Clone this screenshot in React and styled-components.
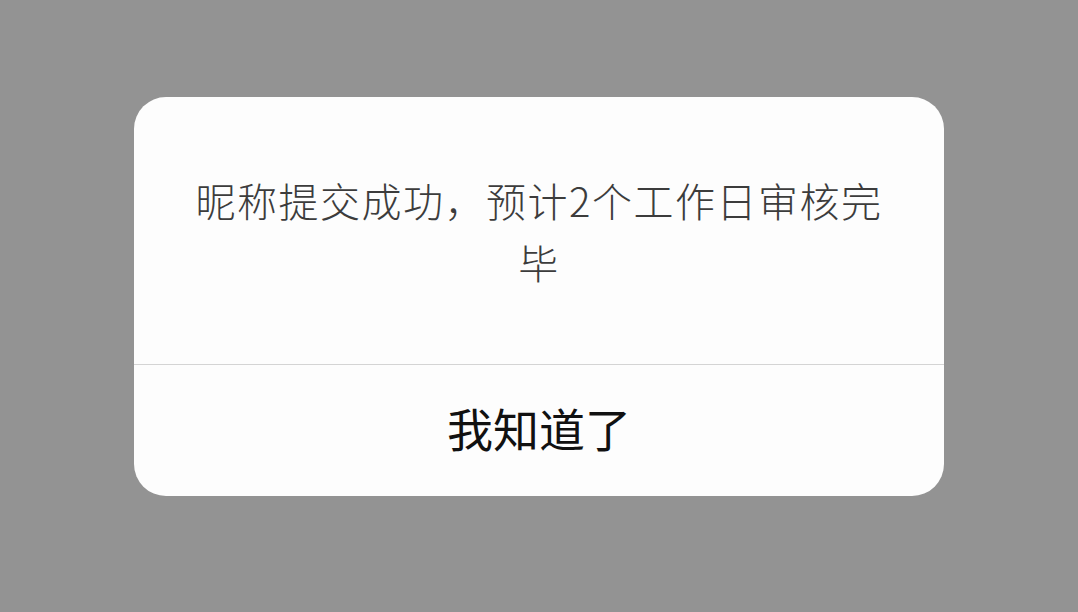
import React from 'react'
import styled, {createGlobalStyle} from 'styled-components'

const GlobalStyle = createGlobalStyle`
  html, body {
    margin: 0;
    padding: 0;
    background: #939393;
    font-family: "Noto Sans CJK SC", "Noto Sans", sans-serif;
  }
`

const Overlay = styled.div`
  width: 100vw;
  height: 100vh;
  display: flex;
  justify-content: center;
  align-items: flex-start;
  padding-top: 97px;
  box-sizing: border-box;
`
const Dialog = styled.div`
  width: 810px;
  background: #fdfdfd;
  border-radius: 32px;
  overflow: hidden;
  display: flex;
  flex-direction: column;
`
const Message = styled.div`
  height: 268px;
  box-sizing: border-box;
  padding: 0 50px;
  display: flex;
  align-items: center;
  justify-content: center;
  text-align: center;
  font-size: 40px;
  font-weight: 300;
  letter-spacing: 1.5px;
  line-height: 62px;
  color: #3c3c3c;
  border-bottom: 1px solid #d4d4d4;
`
const Action = styled.button`
  height: 131px;
  border: none;
  background: transparent;
  font-family: "Noto Sans CJK SC", "Noto Sans", sans-serif;
  font-size: 46px;
  color: #111;
  cursor: pointer;
  padding: 0 0 7px;
`

export default function App() {
  return (
    <>
      <GlobalStyle />
      <Overlay>
        <Dialog>
          <Message>昵称提交成功，预计2个工作日审核完毕</Message>
          <Action>我知道了</Action>
        </Dialog>
      </Overlay>
    </>
  )
}
